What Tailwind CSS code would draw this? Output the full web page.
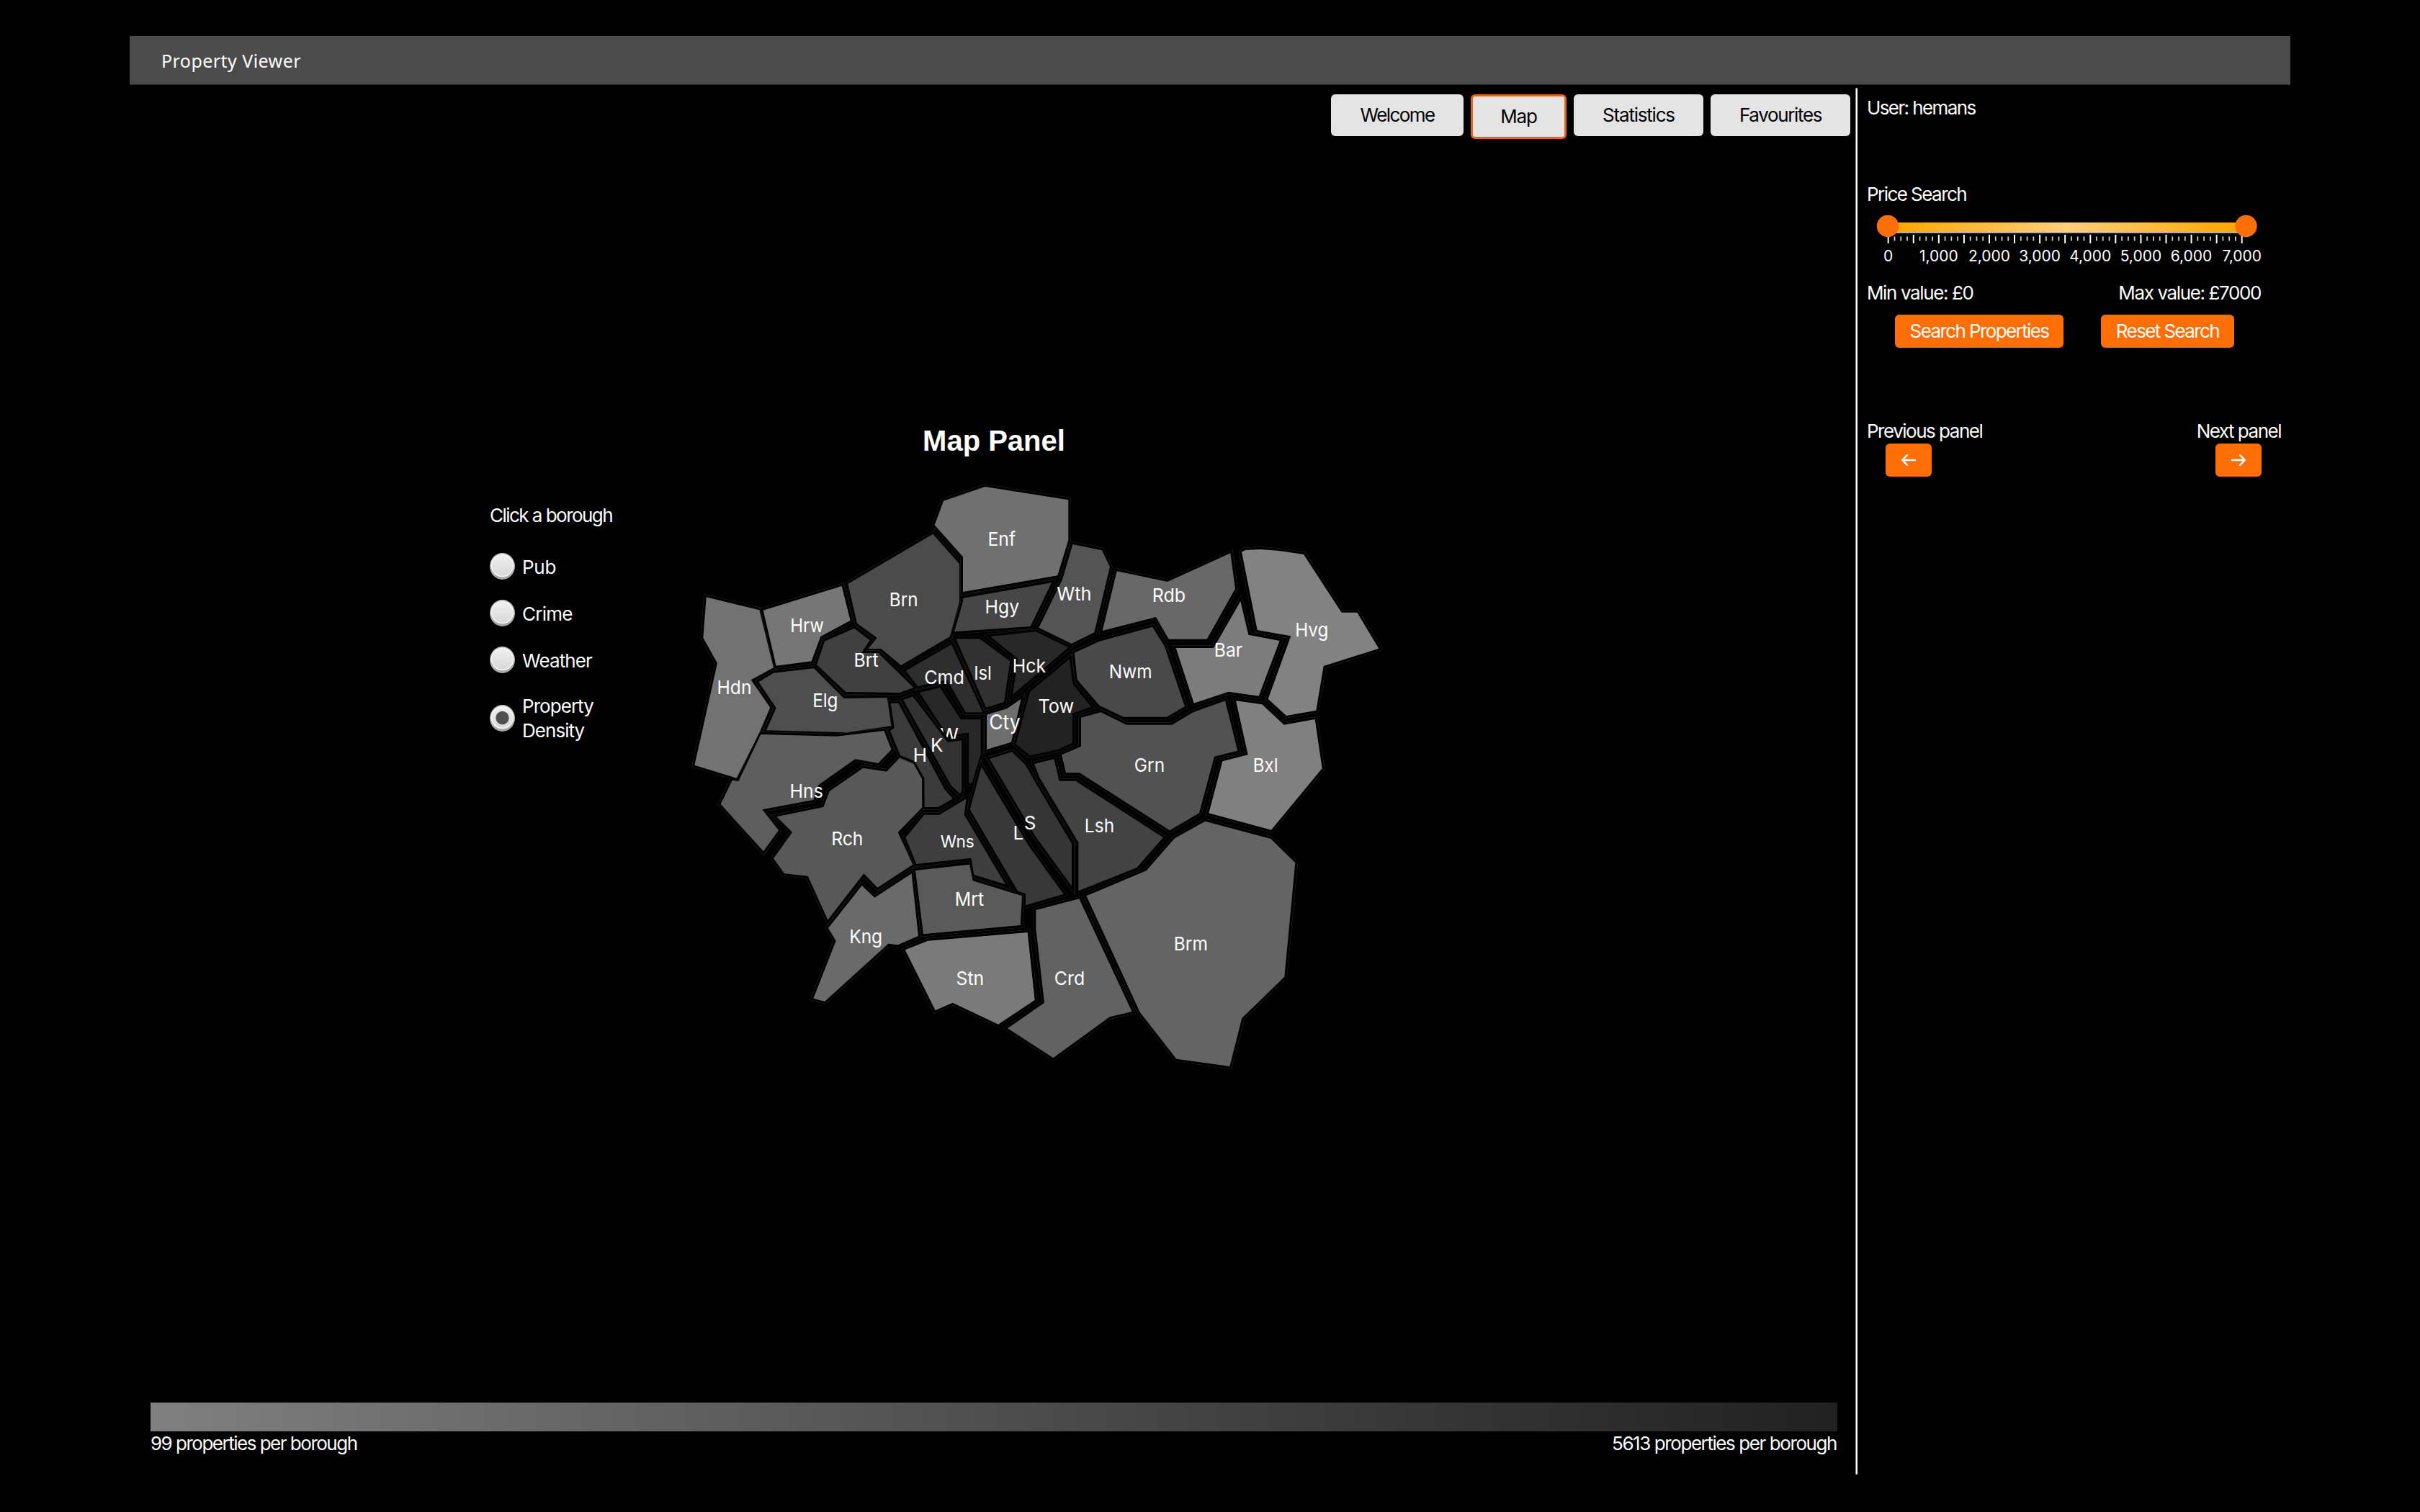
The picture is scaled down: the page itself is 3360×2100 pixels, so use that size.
<!DOCTYPE html>
<html lang="en">
<head>
<meta charset="utf-8">
<title>Property Viewer</title>
<script src="https://cdn.jsdelivr.net/npm/@tailwindcss/browser@4"></script>
</head>
<body class="bg-black">
<div class="flex h-[2100px] w-[3360px] flex-col overflow-hidden bg-black px-[180px] pt-[50px] font-['Inter',sans-serif] text-[26px] leading-[32px] text-white">
  <header class="flex h-[68px] items-center border-b border-[#2a2a2a] bg-[#4b4b4b] pl-[44px]">
    <span class="font-['Noto_Sans',sans-serif] text-[25px] tracking-[0.45px]">Property Viewer</span>
  </header>
  <div class="flex">
    <main class="flex w-[2396px] flex-col">
      <nav class="flex h-[75px] items-start justify-end gap-[10px] pt-[13px] pr-[7px] text-black">
        <button class="h-[58px] w-[184px] rounded-[6px] bg-[#e4e4e4] tracking-[-1.6px]">Welcome</button>
        <button class="h-[62px] w-[133px] rounded-[6px] border-[3px] border-[#e8660c] bg-[#e4e4e4] tracking-[-1.2px]">Map</button>
        <button class="h-[58px] w-[180px] rounded-[6px] bg-[#e4e4e4] tracking-[-1.2px]">Statistics</button>
        <button class="h-[58px] w-[194px] rounded-[6px] bg-[#e4e4e4] tracking-[-1.34px]">Favourites</button>
      </nav>
      <h1 class="mt-[395px] pl-1 text-center font-['Liberation_Sans',sans-serif] text-[40px] leading-[48px] font-bold">Map Panel</h1>
      <div class="flex">
        <div class="ml-[500px] flex w-[260px] flex-col pt-[64px]">
          <p class="tracking-[-1.53px]">Click a borough</p>
          <div class="mt-[36px] flex h-[37px] items-center gap-[10px]"><svg class="h-[37px] w-[35px]" viewBox="0 0 35 37"><use href="#radio"/></svg><span class="pt-[2px] tracking-[-0.3px]">Pub</span></div>
          <div class="mt-[28px] flex h-[37px] items-center gap-[10px]"><svg class="h-[37px] w-[35px]" viewBox="0 0 35 37"><use href="#radio"/></svg><span class="pt-[2px] tracking-[-0.76px]">Crime</span></div>
          <div class="mt-[28px] flex h-[37px] items-center gap-[10px]"><svg class="h-[37px] w-[35px]" viewBox="0 0 35 37"><use href="#radio"/></svg><span class="pt-[2px] tracking-[-0.89px]">Weather</span></div>
          <div class="mt-[28px] flex h-[68px] items-center gap-[10px]"><svg class="h-[37px] w-[35px]" viewBox="0 0 35 37"><use href="#radio"/><circle cx="17.5" cy="18" r="9.2" fill="#505050"/></svg><span class="pt-[2px] leading-[34px] tracking-[-0.95px]">Property<br>Density</span></div>
        </div>
        <svg id="map" class="mt-[24px] h-[830px] w-[990px]" viewBox="0 0 2970 2490" font-family="Inter, sans-serif" font-size="78" fill="#fff" text-anchor="middle"></svg>
      </div>
      <div class="mt-[458px] ml-[29px] h-[40px] w-[2342px] bg-linear-to-r from-[#808080] to-[#212121]"></div>
      <div class="mt-px mr-[26px] ml-[29px] flex justify-between"><span class="tracking-[-1.5px]">99 properties per borough</span><span class="tracking-[-1.42px]">5613 properties per borough</span></div>
    </main>
    <div class="mt-[4px] h-[1926px] w-[3px] rounded-full border-l border-[#8a8a8a] bg-white"></div>
    <aside class="flex flex-1 flex-col pt-[16px] pl-[12px]">
      <p class="pl-px tracking-[-1.6px]">User: hemans</p>
      <p class="mt-[88px] pl-px tracking-[-1.55px]">Price Search</p>
      <svg id="slider" class="mt-[4px] h-[85px] w-[560px]" viewBox="2591 290 560 85" font-family="Inter, sans-serif" font-size="21" fill="#fff" text-anchor="middle"></svg>
      <div class="mt-[16px] flex w-[548px] justify-between pl-px tracking-[-1.38px]"><span>Min value: £0</span><span>Max value: £7000</span></div>
      <div class="mt-[14px] ml-[40px] flex gap-[52px] tracking-[-1.6px]">
        <button class="h-[46px] w-[234px] rounded-[6px] bg-[#fe6e06]">Search Properties</button>
        <button class="h-[46px] w-[185px] rounded-[6px] bg-[#fe6e06]">Reset Search</button>
      </div>
      <div class="mt-[100px] flex w-[576px] justify-between pl-px tracking-[-1.49px]"><span>Previous panel</span><span>Next panel</span></div>
      <div class="mt-[1px] ml-[27px] flex w-[522px] justify-between">
        <button class="flex h-[46px] w-[64px] items-center justify-center rounded-[6px] bg-[#fe6e06]"><svg class="h-[18px] w-[22px]" viewBox="0 0 22 18" fill="none" stroke="#fff" stroke-width="2.4" stroke-linecap="round" stroke-linejoin="round"><path d="M20 9H2.5M9 2.2L2.2 9L9 15.8"/></svg></button>
        <button class="flex h-[46px] w-[64px] items-center justify-center rounded-[6px] bg-[#fe6e06]"><svg class="h-[18px] w-[22px]" viewBox="0 0 22 18" fill="none" stroke="#fff" stroke-width="2.4" stroke-linecap="round" stroke-linejoin="round"><path d="M2 9H19.5M13 2.2L19.8 9L13 15.8"/></svg></button>
      </div>
    </aside>
  </div>
</div>
<svg class="absolute h-0 w-0">
  <defs>
    <linearGradient id="rg" x1="0" y1="0" x2="0" y2="1"><stop offset="0" stop-color="#efefef"/><stop offset="1" stop-color="#d9d9d9"/></linearGradient>
    <linearGradient id="ro" x1="0" y1="0" x2="0" y2="1"><stop offset="0" stop-color="#c4c4c4"/><stop offset="1" stop-color="#a6a6a6"/></linearGradient>
    <g id="radio"><ellipse cx="17.5" cy="18.5" rx="17.5" ry="18.5" fill="url(#ro)"/><circle cx="17.5" cy="17.5" r="15.8" fill="#f6f6f6"/><circle cx="17.5" cy="17.5" r="14.3" fill="url(#rg)"/></g>
  </defs>
</svg>
<script>
// Borough outlines: fill, outline path
const boroughs = {
  Hdn: ['#727272','122,508 343,562 402,802 308,853 388,968 342,1075 248,1262 73,1208 168,783 109,678'],
  Hrw: ['#767676','359,563 686,462 722,605 598,672 560,775 413,794'],
  Brn: ['#4b4b4b','712,453 1066,245 1176,370 1176,528 1136,673 933,792 850,723 797,723 833,677 750,617'],
  Brt: ['#404040','738,638 803,688 768,740 838,741 985,885 925,907 875,905 703,903 582,790 615,692'],
  Elg: ['#4e4e4e','402,824 570,805 695,930 875,927 892,1045 705,1072 372,1063 413,970 340,862'],
  Hns: ['#5e5e5e','349,1080 665,1088 710,1083 862,1065 893,1143 838,1200 742,1183 590,1290 568,1353 355,1393 423,1480 360,1567 182,1371 230,1271 256,1275'],
  Rch: ['#585858','415,1423 610,1383 635,1317 775,1220 873,1235 927,1178 985,1202 1020,1265 1020,1385 920,1488 982,1622 835,1718 778,1660 628,1853 545,1670 447,1660 402,1597 480,1488'],
  Kng: ['#6a6a6a','770,1710 823,1760 977,1660 1005,1920 920,1957 880,1952 615,2193 568,2180 662,1940 630,1887'],
  Mrt: ['#5a5a5a','993,1647 1218,1622 1232,1690 1437,1753 1430,1875 1026,1912'],
  Wns: ['#3e3e3e','1030,1415 1093,1415 1205,1348 1196,1415 1368,1705 1237,1665 1225,1595 997,1620 952,1510'],
  H:   ['#3b3b3b','890,950 922,950 1115,1310 1148,1348 1088,1383 1031,1383 1030,1263 990,1192 930,1167 888,1065 905,1053'],
  W:   ['#282828','1010,905 1095,885 1182,1018 1265,1018 1265,1163 1228,1283 1215,1283 1215,1073 1125,1082'],
  K:   ['#323232','942,936 982,922 1127,1112 1186,1105 1186,1312 1180,1328 1142,1293'],
  Cmd: ['#2e2e2e','953,815 1143,705 1273,988 1202,988 1125,853 1003,880'],
  Isl: ['#313131','1162,682 1260,682 1387,775 1362,945 1287,968'],
  Hck: ['#282828','1305,672 1495,652 1630,718 1398,915 1420,765'],
  Hgy: ['#464646','1192,512 1560,448 1472,630 1155,652 1190,530'],
  Enf: ['#707070','1110,107 1283,48 1630,103 1630,270 1585,418 1191,486 1191,340 1073,208'],
  Wth: ['#545454','1648,288 1770,313 1803,382 1738,655 1643,702 1507,635 1605,435'],
  Rdb: ['#686868','1832,400 2043,444 2305,325 2325,473 2207,683 2048,683 1995,591 1772,648'],
  Nwm: ['#494949','1655,740 1760,692 1980,632 2030,712 2115,963 2040,1007 1860,1007 1760,960 1667,852'],
  Bar: ['#7c7c7c','2078,720 2235,720 2347,525 2380,665 2510,690 2423,920 2297,902 2153,950'],
  Hvg: ['#828282','2352,320 2368,312 2430,309 2500,314 2610,330 2768,572 2833,572 2923,722 2693,795 2662,980 2538,1002 2462,932 2557,670 2417,645'],
  Bxl: ['#808080','2328,940 2437,955 2528,1040 2657,1017 2687,1222 2475,1478 2215,1408 2272,1192 2378,1165'],
  Grn: ['#525252','2283,940 2335,1148 2238,1172 2175,1408 2052,1480 1677,1240 1620,1240 1602,1165 1683,1130 1683,1010 1765,988 1872,1040 2062,1040 2150,988'],
  Tow: ['#222222','1635,765 1648,870 1725,965 1647,992 1647,1115 1585,1143 1470,1168 1412,1120 1470,903'],
  Cty: ['#6e6e6e','1290,998 1375,972 1433,932 1392,1112 1290,1143'],
  L:   ['#383838','1268,1215 1465,1545 1610,1745 1452,1792 1452,1743 1420,1733 1220,1393'],
  S:   ['#353535','1302,1182 1395,1153 1452,1208 1495,1285 1644,1535 1644,1712 1495,1508'],
  Lsh: ['#434343','1488,1203 1570,1183 1592,1274 1660,1274 2025,1510 1915,1635 1672,1732 1672,1530 1510,1260'],
  Brm: ['#646464','1705,1753 1955,1648 2073,1513 2200,1442 2473,1515 2575,1615 2530,2090 2353,2262 2302,2463 2080,2432 1928,2237'],
  Crd: ['#626262','1495,1812 1675,1765 1895,2235 1802,2257 1567,2428 1377,2305 1530,2198 1495,1890'],
  Stn: ['#7a7a7a','1460,1905 1490,2187 1338,2288 1148,2198 1076,2230 950,1978 1045,1940'],
};
// Labels: left and right edge of the glyphs, baseline
const labels = {
  Hdn:[172,307,911], Hrw:[477,608,654], Brn:[890,1000,546], Brt:[742,835,798], Elg:[570,667,966],
  Cmd:[1035,1193,869], W:[1100,1170,1111], K:[1062,1105,1151], H:[990,1037,1193], Enf:[1300,1407,294],
  Hgy:[1288,1422,576], Wth:[1587,1723,522], Hck:[1403,1533,822], Isl:[1242,1307,852], Cty:[1305,1427,1058],
  Tow:[1510,1650,990], Nwm:[1805,1975,846], Rdb:[1985,2115,528], Bar:[2243,2352,756], Hvg:[2580,2710,672],
  Bxl:[2405,2500,1236], Grn:[1910,2028,1236], Hns:[475,605,1344], Rch:[648,772,1543], Wns:[1103,1235,1551],
  Mrt:[1163,1275,1794], Kng:[723,852,1951], Stn:[1168,1275,2124], Crd:[1577,1695,2124], Lsh:[1703,1818,1488],
  S:[1450,1493,1476], L:[1405,1440,1519], Brm:[2075,2207,1981],
};
const border = n => `<polygon points="${boroughs[n][1]}" fill="none" stroke="#2c2c2c" stroke-width="22"/><polygon points="${boroughs[n][1]}" fill="none" stroke="#000" stroke-width="19.5"/>`;
const area = n => `<polygon points="${boroughs[n][1]}" fill="${boroughs[n][0]}"/>`;
const label = n => {
  const [a, b, y] = labels[n];
  const size = n === 'Wns' ? 70 : n === 'Cty' ? 84 : 78;
  const fit = n.length > 1 ? `textLength="${b - a + 9}" lengthAdjust="spacingAndGlyphs"` : '';
  return `<text x="${(a + b) / 2 - 1}" y="${y}" font-size="${size}" ${fit}>${n}</text>`;
};
const names = Object.keys(boroughs);
// W and L sit under the neighbouring boroughs K and S
document.getElementById('map').innerHTML =
  names.map(border).join('') + names.map(area).join('') +
  label('W') + border('K') + area('K') + label('L') + border('S') + area('S') +
  names.filter(n => n !== 'W' && n !== 'L').map(label).join('');

// Price slider
const step = 8.768;
let s = '<defs><linearGradient id="tg"><stop offset="0" stop-color="#ffa500"/><stop offset=".5" stop-color="#ffcf7a"/><stop offset="1" stop-color="#ffa500"/></linearGradient></defs>';
s += '<rect x="2630" y="320" width="480" height="4" fill="#b4b0a8"/><rect x="2630" y="309" width="480" height="13" fill="url(#tg)"/>';
for (let i = 0; i <= 56; i++) {
  const x = 2621.7 + i * step;
  s += i % 4 ? `<rect x="${x - .9}" y="328.5" width="1.8" height="6" fill="#ccc"/>` : `<rect x="${x - 1}" y="326" width="2" height="12"/>`;
  if (i % 8 === 0) s += `<text x="${x}" y="363">${i ? i / 8 + ',000' : '0'}</text>`;
}
s += '<circle cx="2621" cy="314" r="15.2" fill="#fe6e06"/><circle cx="3118.5" cy="314" r="15.2" fill="#fe6e06"/>';
document.getElementById('slider').innerHTML = s;
</script>
</body>
</html>
